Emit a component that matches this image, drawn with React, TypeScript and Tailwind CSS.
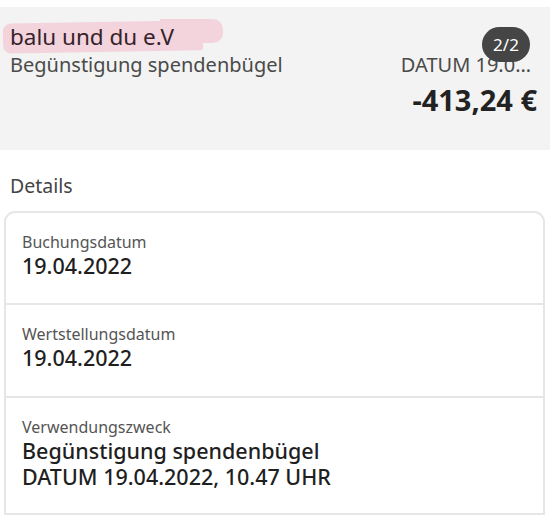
const rows = [
  { label: "Buchungsdatum", value: ["19.04.2022"], h: "h-[90px]" },
  { label: "Wertstellungsdatum", value: ["19.04.2022"], h: "h-[93px]" },
  {
    label: "Verwendungszweck",
    value: ["Begünstigung spendenbügel", "DATUM 19.04.2022, 10.47 UHR"],
    h: "h-[117px]",
  },
];

export default function App() {
  return (
    <div
      className="w-[550px] h-[517px] overflow-hidden bg-white pt-[7px]"
      style={{ fontFamily: '"Noto Sans", "Open Sans", sans-serif' }}
    >
      <header className="relative h-[143px] bg-[#f3f3f3] pl-[10px] pr-[13px] pt-[15px]">
        <div className="relative">
          <span className="absolute left-[-7px] top-[0px] h-[30px] w-[200px] rounded-l-[8px] rounded-r-[3px] bg-[#f3d3dc] -rotate-[1deg]" />
          <span className="absolute left-[150px] top-[-3px] h-[24px] w-[63px] rounded-r-[10px] bg-[#f3d3dc]" />
          <div className="relative text-[22.5px] leading-[30px] text-[#35232b]">balu und du e.V</div>
        </div>
        <div className="flex items-center justify-between text-[20px] leading-[25px] text-[#4a4a4a]">
          <span>Begünstigung spendenbügel</span>
          <span className="mr-[6px]">DATUM 19.0…</span>
        </div>
        <div className="mt-[6px] text-right text-[29px] font-bold leading-[34px] text-[#222222]">
          -413,24 €
        </div>
        <span className="absolute right-[20px] top-[20px] flex h-[35px] w-[48px] items-center justify-center rounded-full bg-[#454545] text-[17px] text-white">
          2/2
        </span>
      </header>
      <div className="px-[10px] pt-[24px] text-[19.5px] leading-[24px] text-[#444444]">Details</div>
      <div className="mx-[4px] mt-[13px] w-[541px] overflow-hidden rounded-t-[11px] border-2 border-[#e6e6e6]">
        {rows.map((r, i) => (
          <div
            key={r.label}
            className={`${r.h} px-[16px] pt-[18px] ${i > 0 ? "border-t-2 border-[#e6e6e6]" : ""}`}
          >
            <div className="text-[16px] leading-[22px] text-[#555555]">{r.label}</div>
            {r.value.map((v) => (
              <div key={v} className="text-[21.5px] font-medium leading-[26px] text-[#1f1f1f]">
                {v}
              </div>
            ))}
          </div>
        ))}
      </div>
    </div>
  );
}
